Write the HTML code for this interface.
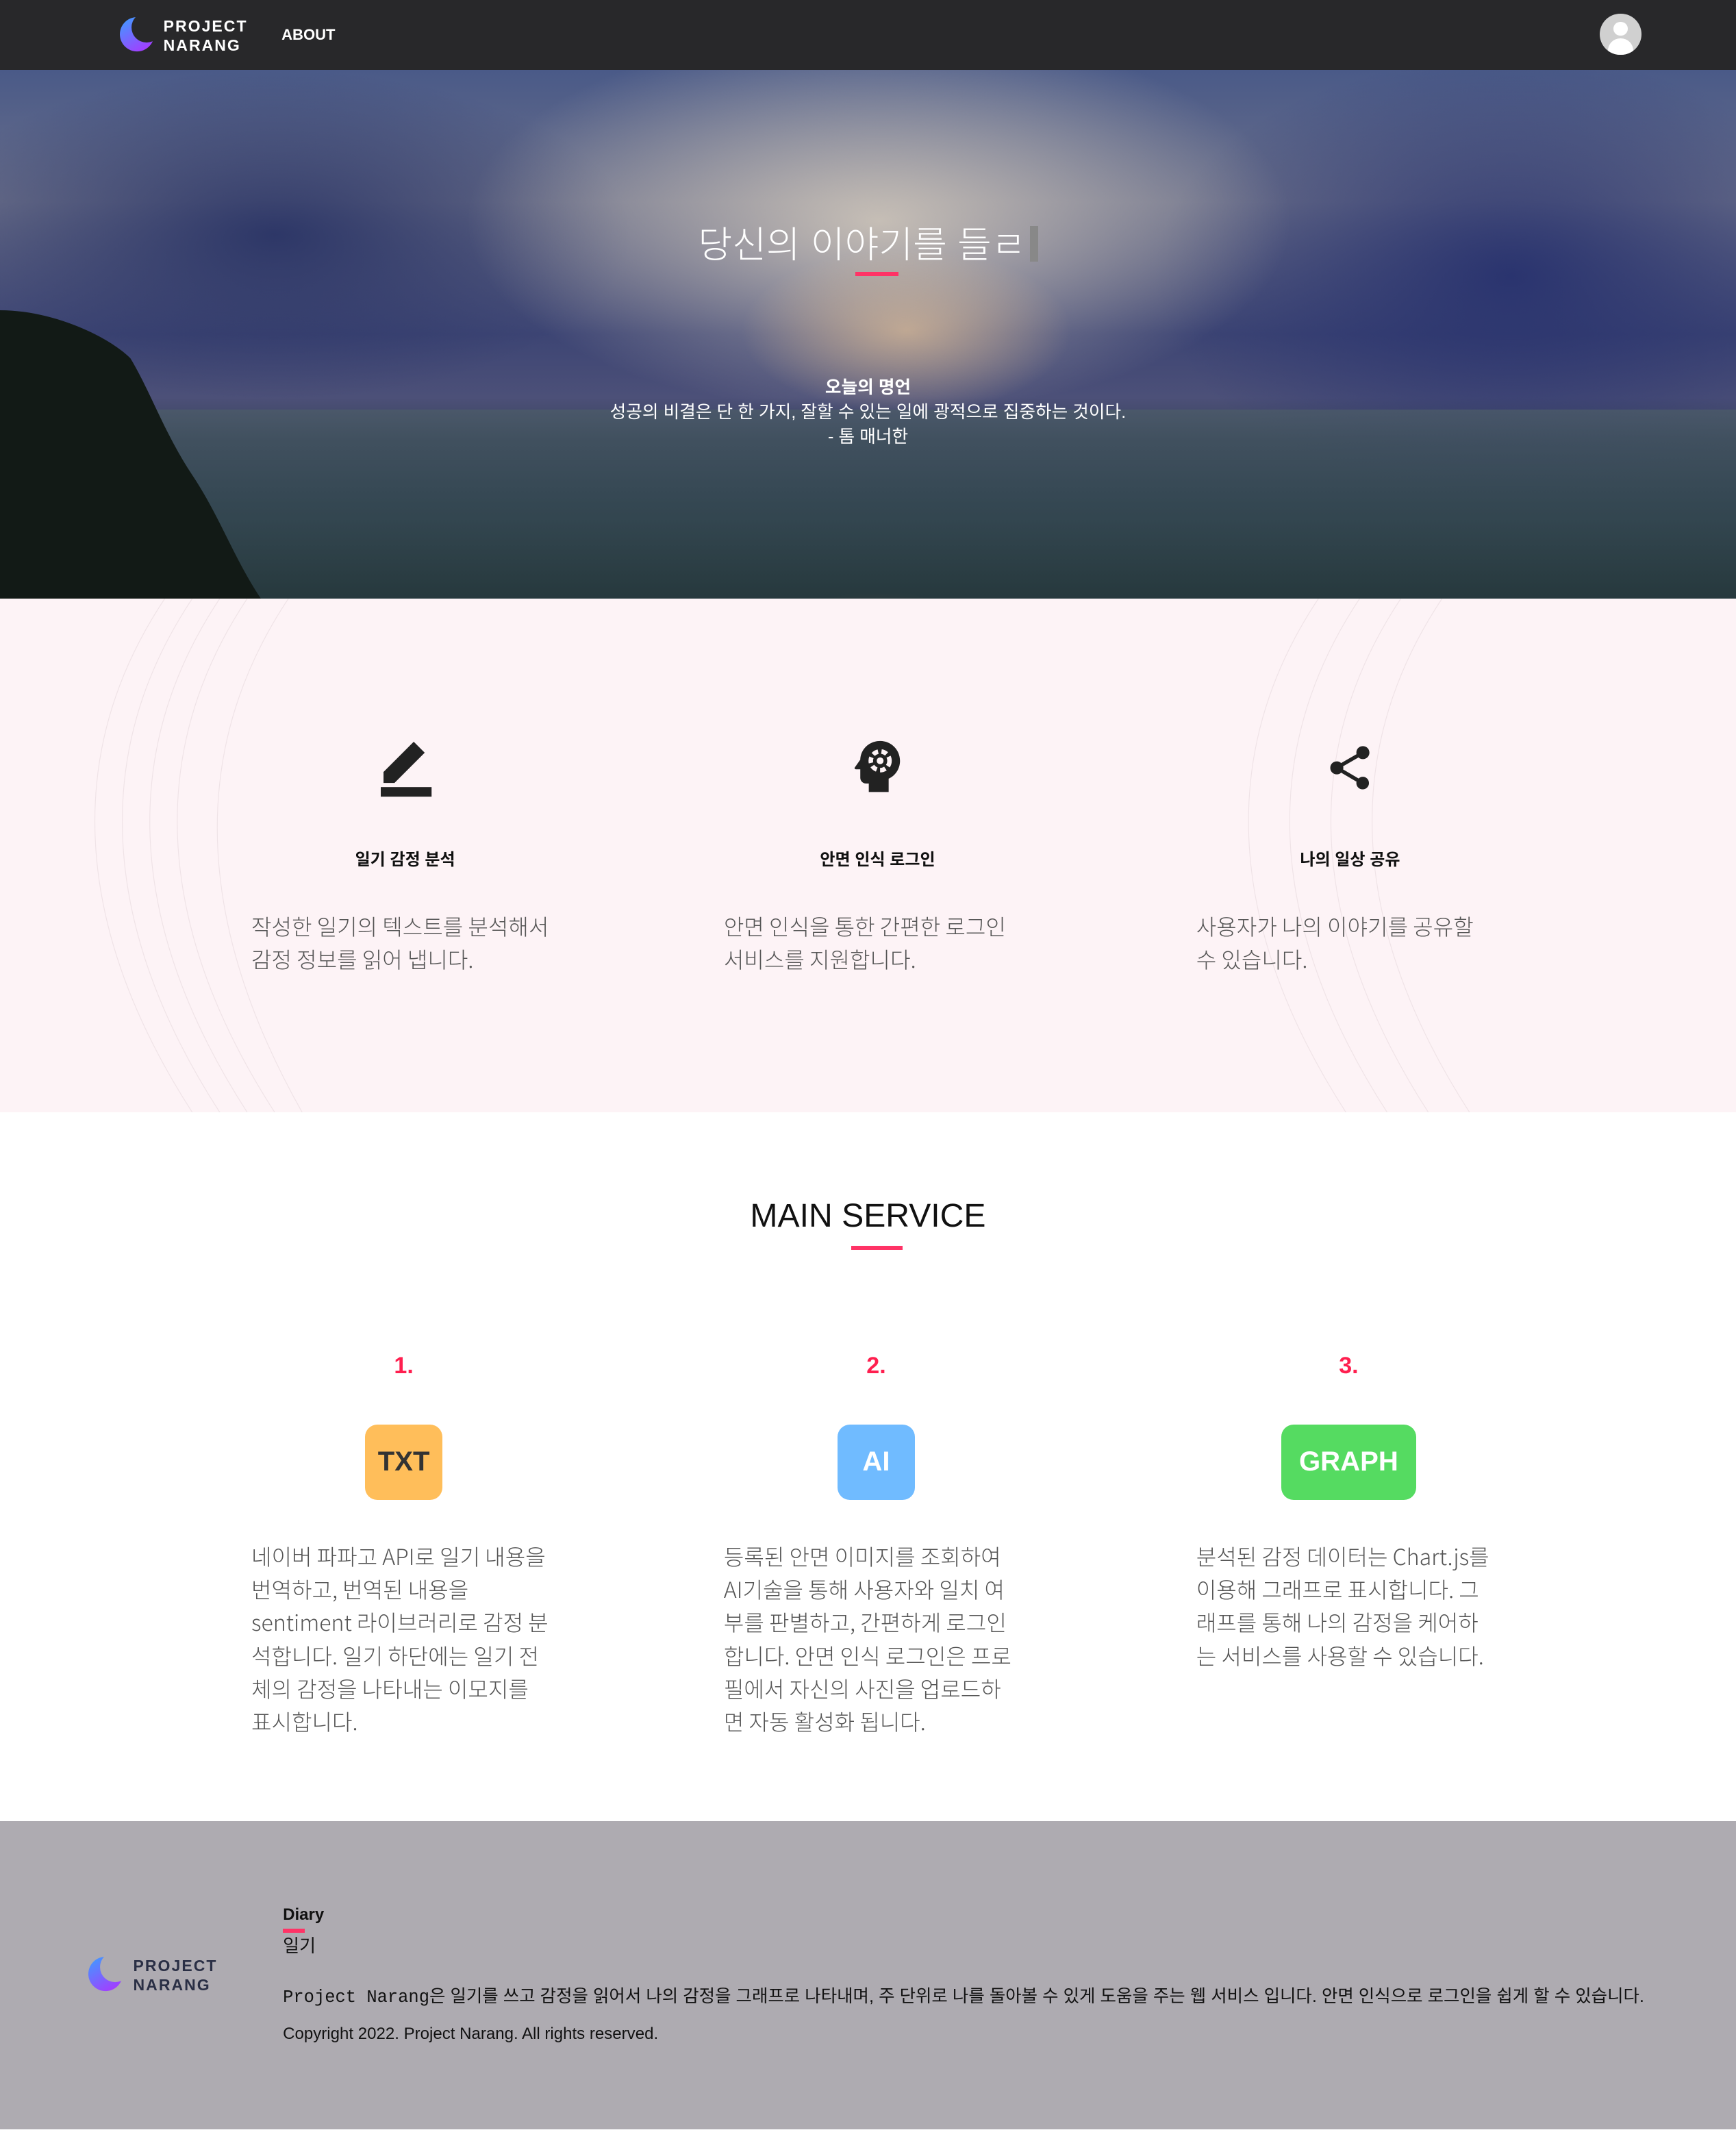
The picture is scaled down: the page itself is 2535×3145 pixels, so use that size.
<!DOCTYPE html>
<html><head><meta charset="utf-8"><style>
html,body{margin:0;padding:0;background:#fff}
body{width:1264px;height:1568px;zoom:2.0055;overflow:hidden;position:relative;font-family:"Liberation Sans","Noto Sans CJK KR",sans-serif}
.a{position:absolute}
.nav{left:0;top:0;width:1264px;height:51px;background:#28282a}
.hero{left:0;top:51px;width:1264px;height:385px;overflow:hidden;
background:
radial-gradient(ellipse 80px 40px at 640px 420px,rgba(255,170,90,.7),transparent),
radial-gradient(ellipse 120px 60px at 660px 190px,rgba(240,200,150,.6),transparent),
radial-gradient(ellipse 300px 140px at 640px 110px,rgba(215,205,190,.85),transparent),
radial-gradient(ellipse 260px 120px at 200px 120px,rgba(40,50,100,.9),transparent),
radial-gradient(ellipse 260px 160px at 1100px 150px,rgba(40,50,110,.95),transparent),
linear-gradient(#4a5a88 0%,#6a6f8a 25%,#3d4574 50%,#4c5078 62%,#37425a 70%,#3c4c58 85%,#2e3b40 100%)}
.feat{left:0;top:436px;width:1264px;height:374px;background:#fdf3f6}
.t{color:#111;font-size:12px;font-weight:bold;text-align:center;width:300px}
.d{color:#555;font-size:16px;line-height:24px;width:218px;font-family:"Noto Sans CJK KR",sans-serif;font-weight:300}
.num{color:#ff1f4f;font-size:17px;font-weight:bold;width:100px;text-align:center}
.badge{height:55px;border-radius:9px;font-size:20px;font-weight:bold;display:flex;align-items:center;justify-content:center;top:1037px}
.foot{left:0;top:1326px;width:1264px;height:224px;background:#aeabb1}
</style></head><body>
<svg width="0" height="0" style="position:absolute"><defs><linearGradient id="g" x1="0" y1="0" x2="0.6" y2="1"><stop offset="0" stop-color="#3aa0ff"/><stop offset="1" stop-color="#a040ff"/></linearGradient><mask id="m"><rect width="30" height="30" fill="#fff"/><circle cx="21" cy="9" r="11" fill="#000"/></mask></defs></svg>
<div class="a nav"></div>
<svg class="a" style="left:86px;top:11px" width="28" height="28" viewBox="0 0 28 28"><circle cx="14" cy="14" r="12.5" fill="url(#g)" mask="url(#m)"/></svg>
<div class="a" style="left:119px;top:12px;color:#fff;font-size:11.5px;font-weight:bold;letter-spacing:1px;line-height:14px">PROJECT<br>NARANG</div>
<div class="a" style="left:205px;top:19px;color:#fff;font-size:11px;font-weight:bold">ABOUT</div>
<div class="a" style="left:1165px;top:10px;width:30px;height:30px;border-radius:50%;background:#d0d0d0;overflow:hidden"><div class="a" style="left:10px;top:6px;width:10px;height:10px;border-radius:50%;background:#fff"></div><div class="a" style="left:6px;top:18px;width:18px;height:14px;border-radius:9px 9px 0 0;background:#fff"></div></div>
<div class="a hero">
<div class="a" style="left:0;top:247px;width:1264px;height:138px;background:linear-gradient(#4c5c68,#324650 50%,#24383c);opacity:.75"></div>
<svg class="a" style="left:0;top:175px" width="230" height="210"><path d="M0 0 C40 0 80 20 95 35 C110 60 120 90 140 120 C160 150 170 180 190 210 L0 210Z" fill="#121a16"/></svg>
</div>
<div class="a" style="left:0;top:156px;width:1264px;text-align:center;color:#fff;font-size:27px;font-weight:300">당신의 이야기를 들ㄹ<span style="display:inline-block;width:6px;height:26px;background:#888;vertical-align:-3px;margin-left:3px"></span></div>
<div class="a" style="left:623px;top:198px;width:31px;height:3px;background:#ff3366"></div>
<div class="a" style="left:0;top:273px;width:1264px;text-align:center;color:#fff;font-size:12.8px;line-height:18px"><b>오늘의 명언</b><br>성공의 비결은 단 한 가지, 잘할 수 있는 일에 광적으로 집중하는 것이다.<br>- 톰 매너한</div>
<div class="a feat">
<svg class="a" style="left:0;top:0" width="1264" height="374" opacity=".35"><g fill="none" stroke="#d8c8cc" stroke-width=".6">
<path d="M140 374 C60 250 40 120 120 0"/><path d="M160 374 C80 250 60 120 140 0"/><path d="M180 374 C100 250 80 120 160 0"/><path d="M200 374 C120 250 100 120 180 0"/><path d="M220 374 C150 250 130 120 210 0"/>
<path d="M980 374 C900 250 880 120 960 0"/><path d="M1010 374 C930 250 910 120 990 0"/><path d="M1040 374 C960 250 940 120 1020 0"/><path d="M1070 374 C990 250 970 120 1050 0"/></g></svg>
</div>
<svg class="a" style="left:275px;top:538px" width="40" height="44" viewBox="0 0 40 44"><path d="M4 24 L26 2 L34 10 L12 32 L4 32Z" fill="#222"/><rect x="2" y="35" width="37" height="7" fill="#222"/></svg>
<svg class="a" style="left:622px;top:539px" width="34" height="38" viewBox="3.8 2.8 16.4 18.4"><path d="M13 3C9.2 3 6.1 5.9 6 9.6L4.1 12.3c-.3.4 0 .7.4.7H6v3c0 1.1.9 2 2 2h1v3h7v-4.7c2.4-1.1 4-3.5 4-6.3 0-3.9-3.1-7-7-7z" fill="#222"/><circle cx="13" cy="10" r="3.3" fill="none" stroke="#fdf3f6" stroke-width="1.6" stroke-dasharray="2 1.2"/><circle cx="13" cy="10" r="1.2" fill="#fdf3f6"/></svg>
<svg class="a" style="left:964px;top:539px" width="38" height="40" viewBox="0 0 24 24"><path d="M18 16.1c-.8 0-1.4.3-2 .8l-7.1-4.2c.1-.2.1-.5.1-.7s0-.5-.1-.7L16 7.2c.5.5 1.2.8 2 .8 1.7 0 3-1.3 3-3s-1.3-3-3-3-3 1.3-3 3c0 .2 0 .5.1.7L8 9.8C7.5 9.3 6.8 9 6 9c-1.7 0-3 1.3-3 3s1.3 3 3 3c.8 0 1.5-.3 2-.8l7.1 4.2c-.1.2-.1.4-.1.6 0 1.6 1.3 2.9 2.9 2.9s2.9-1.3 2.9-2.9-1.2-2.9-2.8-2.9z" fill="#222"/></svg>
<div class="a t" style="left:145px;top:616px">일기 감정 분석</div>
<div class="a t" style="left:489px;top:616px">안면 인식 로그인</div>
<div class="a t" style="left:833px;top:616px">나의 일상 공유</div>
<div class="a d" style="left:183px;top:662px;width:230px">작성한 일기의 텍스트를 분석해서 감정 정보를 읽어 냅니다.</div>
<div class="a d" style="left:527px;top:662px;width:218px">안면 인식을 통한 간편한 로그인 서비스를 지원합니다.</div>
<div class="a d" style="left:871px;top:662px;width:212px">사용자가 나의 이야기를 공유할 수 있습니다.</div>
<div class="a" style="left:0;top:871px;width:1264px;text-align:center;font-size:24px;color:#111">MAIN SERVICE</div>
<div class="a" style="left:620px;top:907px;width:37px;height:3px;background:#ff3366"></div>
<div class="a num" style="left:244px;top:985px">1.</div>
<div class="a num" style="left:588px;top:985px">2.</div>
<div class="a num" style="left:932px;top:985px">3.</div>
<div class="a badge" style="left:266px;width:56px;background:#ffbe5a;color:#333">TXT</div>
<div class="a badge" style="left:610px;width:56px;background:#70bbff;color:#fff">AI</div>
<div class="a badge" style="left:933px;width:98px;background:#55db61;color:#fff">GRAPH</div>
<div class="a d" style="left:183px;top:1121px">네이버 파파고 API로 일기 내용을 번역하고, 번역된 내용을 sentiment 라이브러리로 감정 분석합니다. 일기 하단에는 일기 전체의 감정을 나타내는 이모지를 표시합니다.</div>
<div class="a d" style="left:527px;top:1121px;width:214px">등록된 안면 이미지를 조회하여 AI기술을 통해 사용자와 일치 여부를 판별하고, 간편하게 로그인합니다. 안면 인식 로그인은 프로필에서 자신의 사진을 업로드하면 자동 활성화 됩니다.</div>
<div class="a d" style="left:871px;top:1121px;width:214px">분석된 감정 데이터는 Chart.js를 이용해 그래프로 표시합니다. 그래프를 통해 나의 감정을 케어하는 서비스를 사용할 수 있습니다.</div>
<div class="a foot"></div>
<svg class="a" style="left:63px;top:1423px" width="28" height="28" viewBox="0 0 28 28"><circle cx="14" cy="14" r="12.5" fill="url(#g)" mask="url(#m)"/></svg>
<div class="a" style="left:97px;top:1424px;color:#2a2f45;font-size:11.5px;font-weight:bold;letter-spacing:1px;line-height:14px">PROJECT<br>NARANG</div>
<div class="a" style="left:206px;top:1387px;font-size:12px;font-weight:bold;color:#111">Diary</div>
<div class="a" style="left:206px;top:1404px;width:16px;height:3px;background:#ff3366"></div>
<div class="a" style="left:206px;top:1406px;font-size:13px;color:#111">일기</div>
<div class="a" style="left:206px;top:1443px;font-size:12.7px;color:#111;white-space:nowrap"><span style="font-family:'Liberation Mono',monospace">Project Narang</span>은 일기를 쓰고 감정을 읽어서 나의 감정을 그래프로 나타내며, 주 단위로 나를 돌아볼 수 있게 도움을 주는 웹 서비스 입니다. 안면 인식으로 로그인을 쉽게 할 수 있습니다.</div>
<div class="a" style="left:206px;top:1474px;font-size:12px;color:#111">Copyright 2022. Project Narang. All rights reserved.</div>
</body></html>
